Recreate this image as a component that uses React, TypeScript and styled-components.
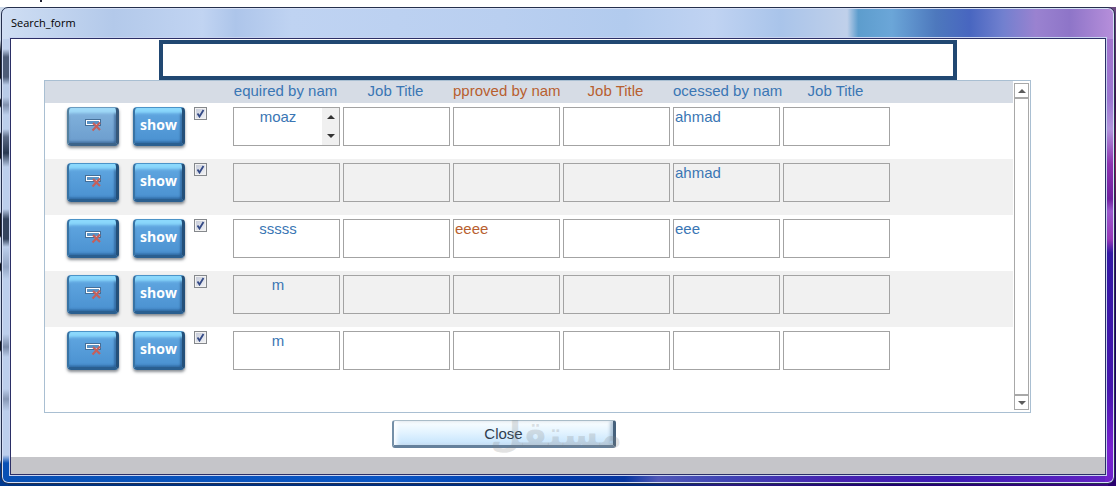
import React from "react";
import styled, { createGlobalStyle, css } from "styled-components";

const GlobalStyle = createGlobalStyle`
  * { box-sizing: border-box; }
  body { margin: 0; font-family: "Liberation Sans", Arial, sans-serif; }
`;

const BLUE = "#3a76b4";
const RUST = "#b85f30";

const Desktop = styled.div`
  min-height: 100vh;
  padding: 7px 1px 3px;
  background:
    radial-gradient(circle at 41px 1px, #223 0 1px, transparent 1px) no-repeat,
    linear-gradient(#fff, #fff) 0 0 / 100% 7px no-repeat,
    linear-gradient(#6b4a80 0, #40104f 20%, #8b1f5c 32%, #2b0a55 45%, #1a0060 70%, #2a0070) 100% 7px / 8px 100% no-repeat,
    linear-gradient(#cdd9ea 0 40px, #15181f 52px 78px, #cdd9ea 80px 98px, #15181f 100px 106px, #cdd9ea 108px 132px, #15181f 134px 158px, #cdd9ea 160px 212px, #15181f 214px 236px, #cdd9ea 238px 262px, #15181f 264px 270px, #cdd9ea 272px 340px, #15181f 342px 350px, #cdd9ea 352px 460px, #00398f 464px) 0 0 / 8px 100% no-repeat,
    linear-gradient(90deg, #00337f, #002a7c 58%, #2a1a80 65%, #1d0070 80%, #3a0880);
`;

const Window = styled.main`
  border: 1px solid #25304d;
  border-radius: 7px;
  box-shadow: inset 0 0 0 1px #d5dff5;
  padding: 1px 8px 8px;
  background:
    linear-gradient(90deg, #cfdef3 0, #b3c9ea 10%, #c1d4f2 18%, #adc5ea 21%, #bfd3f2 26%, #b9cff0 45%, #b2cbee 56%, #c0d3f2 64%, #a9c4ea 70%, #c0d0ea 76%, #5d9dcd 77%, #6ba6d8 80%, #4d78bd 84%, #4866c0 87%, #7180cf 90%, #9a82d0 93%, #8e75c8 96%, #b78fdb) 0 0 / 100% 31px no-repeat,
    linear-gradient(#c1d2ee 0 10px, #4d5c77 18px 38px, #b8cbe8 46px 58px, #8090ad 66px, #bccfec 76px 90px, #5b6a85 98px, #283850 114px, #bccfec 128px 170px, #34445d 180px 200px, #bccfec 208px, #93a5c4 228px, #bccfec 240px 295px, #7a8ba8 308px, #bccfec 318px 350px, #8798b5 360px, #bccfec 372px 416px, #0850b4 424px) 0 31px / 9px 100% no-repeat,
    linear-gradient(#a274cd 0, #9b76d0 60px, #b294dc 90px, #8d33b0 125px, #7020a0 160px, #9a58cc 172px, #9838b8 200px, #3318a4 214px, #4516ad 350px, #7a22d0 410px, #6424c4) 100% 31px / 9px 100% no-repeat,
    linear-gradient(90deg, #0850b4 0, #0a55c4 35%, #003aa8 50%, #0636a0 56%, #5058b8 59%, #4045b4 65%, #4722b0 75%, #3c1ab4 85%, #6424c4);
`;

const TitleBar = styled.header`
  height: 29px;
  padding: 5px 1px 0;
  h1 {
    margin: 0;
    color: #000;
    font: 11px/18px "Open Sans", "Segoe UI", sans-serif;
  }
`;

const Client = styled.form`
  border: 1px solid #2b2f66;
  box-shadow: 0 0 0 1px #c8d3f0;
  background: #fff;
  padding-top: 1px;
`;

const SearchInput = styled.input`
  display: block;
  width: 73%;
  height: 40px;
  margin: 0 auto;
  padding: 0 8px;
  border: 4px solid #214872;
  border-radius: 0;
  background: #fff;
  color: ${BLUE};
  font: 15px/17px "Liberation Sans", Arial, sans-serif;
  outline: none;
`;

const Panel = styled.section`
  display: flex;
  margin: 0 74px 0 33px;
  border: 1px solid #a9bfd2;
`;

const TableArea = styled.div`
  flex: 1;
  min-width: 0;
  padding-bottom: 29px;
`;

const Table = styled.table`
  width: 100%;
  table-layout: fixed;
  border-collapse: collapse;
  thead tr { height: 22px; background: #d6dce5; }
  tbody tr { height: 56px; }
  tbody tr:nth-child(even) { background: #f1f1f1; }
`;

const Column = styled.col<{ $width?: number }>`
  ${(p) => p.$width && css`width: ${p.$width}px;`}
`;

const HeadCell = styled.th<{ $color?: string }>`
  padding: 0 5px 0 0;
  color: ${(p) => p.$color ?? BLUE};
  font-size: 15px;
  font-weight: 400;
  line-height: 20px;
  text-align: center;
  vertical-align: top;
  white-space: nowrap;
`;

const Cell = styled.td<{ $indent?: number }>`
  padding: 4px 0 0 ${(p) => p.$indent ?? 0}px;
  vertical-align: top;
`;

const ActionButton = styled.button<{ $muted?: boolean }>`
  display: flex;
  align-items: center;
  justify-content: center;
  width: 52px;
  height: 39px;
  padding: 2px 0 3px;
  border: solid;
  border-width: 1px 3px 3px 2px;
  border-color: ${(p) => (p.$muted ? "#6c9cc0 #36587a #3c648a #54809f" : "#4c94c8 #24507a #2a5f90 #3873a4")};
  border-radius: 4px;
  background: ${(p) => (p.$muted ? "linear-gradient(#83b4de, #6c9dcd)" : "linear-gradient(#62a8e2, #4a91d0)")};
  box-shadow:
    inset 0 7px 3px -2px ${(p) => (p.$muted ? "#a0daf8" : "#8bd8fc")},
    inset -2px 0 2px rgba(20, 60, 110, 0.4),
    inset 0 -2px 2px rgba(20, 60, 110, 0.3),
    0 2px 3px rgba(40, 50, 60, 0.55);
  color: #fff;
  font: bold 14px/18px "Open Sans", "Segoe UI", sans-serif;
`;

const Tick = styled.input`
  appearance: none;
  display: block;
  width: 13px;
  height: 13px;
  margin: 0;
  border: 1px solid #85888c;
  background: linear-gradient(135deg, #c3c8d6, #f4f5f8);
  box-shadow: inset 0 0 0 1px #f2f2f2;
  &:checked {
    background:
      url("data:image/svg+xml,%3Csvg xmlns='http://www.w3.org/2000/svg' viewBox='0 0 11 11'%3E%3Cpath d='M2.5 5.5l2 3L8.5 2' fill='none' stroke='%23344a86' stroke-width='1.8'/%3E%3C/svg%3E"),
      linear-gradient(135deg, #c3c8d6, #f4f5f8);
  }
`;

const FieldBox = styled.div`
  display: flex;
  width: 107px;
  height: 39px;
  border: 1px solid #a3a3a3;
`;

const FieldText = styled.textarea<{ $color: string; $centered?: boolean; $reserve?: boolean }>`
  flex: 1;
  min-width: 0;
  height: 37px;
  padding: 0 ${(p) => (p.$reserve ? 18 : 1)}px 0 1px;
  border: 0;
  background: transparent;
  color: ${(p) => p.$color};
  font: 15px/17px "Liberation Sans", Arial, sans-serif;
  text-align: ${(p) => (p.$centered ? "center" : "left")};
  resize: none;
  overflow: hidden;
  outline: none;
`;

const FieldScroll = styled.div`
  display: flex;
  flex-direction: column;
  justify-content: space-between;
  align-items: center;
  width: 17px;
  padding: 7px 0;
  background: #f0f0f0;
`;

const ScrollBar = styled.div`
  display: flex;
  flex-direction: column;
  width: 15px;
  margin: 2px 1px;
  border: 1px solid #a8a8a8;
`;

const ScrollTrack = styled.div`
  flex: 1;
  border: solid #a8a8a8;
  border-width: 2px 0;
`;

const ArrowButton = styled.button`
  display: flex;
  align-items: center;
  justify-content: center;
  width: 100%;
  height: 13px;
  padding: 0;
  border: 0;
  background: transparent;
`;

const Actions = styled.div`
  display: flex;
  justify-content: center;
  padding: 7px 108px 9px 0;
`;

const CloseButton = styled.button`
  display: block;
  width: 224px;
  height: 28px;
  padding: 0;
  border: solid;
  border-width: 1px 3px 3px 2px;
  border-color: #a9bcc8 #46617c #64809c #7590a8;
  border-radius: 3px;
  background: linear-gradient(#fbfeff, #e4f4ff 45%, #c4e3fc);
  box-shadow:
    inset 4px 0 4px -1px rgba(255, 255, 255, 0.9),
    inset -3px 0 3px rgba(120, 150, 180, 0.5);
  color: #2f3e4e;
  font: 15px/17px "Liberation Sans", Arial, sans-serif;
`;

const CloseWrap = styled.div`
  position: relative;
`;

const Watermark = styled.span`
  position: absolute;
  right: -6px;
  top: -9px;
  color: rgba(125, 125, 125, 0.22);
  font: bold 36px/48px "DejaVu Sans", sans-serif;
  pointer-events: none;
`;

const StatusStrip = styled.footer`
  height: 17px;
  background: #c5c5c9;
`;

const Arrow = ({ down, color = "#5c5c5c" }: { down?: boolean; color?: string }) => (
  <svg width="8" height="4" viewBox="0 0 8 4" aria-hidden="true">
    <path d={down ? "M0 0h8L4 4z" : "M0 4h8L4 0z"} fill={color} />
  </svg>
);

const DeleteIcon = () => (
  <svg width="18" height="14" viewBox="0 0 18 14" aria-hidden="true">
    <rect x="1" y="1" width="16" height="7" fill="#456f98" />
    <rect x="2.5" y="2.5" width="13" height="4" fill="#5a93c6" stroke="#fff" />
    <path d="M9 5l7 7M16 4.5L8.500 12.500" stroke="#c4605c" strokeWidth="2.200" />
  </svg>
);

const people = [
  { label: "equired by nam" },
  { label: "Job Title" },
  { label: "pproved by nam", color: RUST },
  { label: "Job Title", color: RUST },
  { label: "ocessed by nam" },
  { label: "Job Title" },
];

const records = [
  ["moaz", "", "", "", "ahmad", ""],
  ["", "", "", "", "ahmad", ""],
  ["sssss", "", "eeee", "", "eee", ""],
  ["m", "", "", "", "", ""],
  ["m", "", "", "", "", ""],
];

export default function App() {
  return (
    <>
      <GlobalStyle />
      <Desktop>
        <Window>
          <TitleBar>
            <h1>Search_form</h1>
          </TitleBar>
          <Client onSubmit={(e) => e.preventDefault()}>
            <SearchInput type="text" aria-label="Search" />
            <Panel>
              <TableArea>
                <Table>
                  <colgroup>
                    <Column $width={88} />
                    <Column $width={61} />
                    <Column $width={39} />
                    {people.map((_, i) => (
                      <Column key={i} $width={110} />
                    ))}
                    <Column />
                  </colgroup>
                  <thead>
                    <tr>
                      <td colSpan={3} />
                      {people.map((p, i) => (
                        <HeadCell key={i} $color={p.color} scope="col">
                          {p.label}
                        </HeadCell>
                      ))}
                      <td />
                    </tr>
                  </thead>
                  <tbody>
                    {records.map((values, row) => (
                      <tr key={row}>
                        <Cell $indent={22}>
                          <ActionButton type="button" $muted={row === 0} aria-label="Delete">
                            <DeleteIcon />
                          </ActionButton>
                        </Cell>
                        <Cell>
                          <ActionButton type="button">show</ActionButton>
                        </Cell>
                        <Cell>
                          <Tick type="checkbox" defaultChecked aria-label={`Select row ${row + 1}`} />
                        </Cell>
                        {values.map((value, i) => (
                          <Cell key={i}>
                            <FieldBox>
                              <FieldText
                                aria-label={`${people[i].label}, row ${row + 1}`}
                                defaultValue={value}
                                $color={people[i].color ?? BLUE}
                                $centered={i === 0}
                                $reserve={i === 0 && row !== 0}
                              />
                              {row === 0 && i === 0 && (
                                <FieldScroll>
                                  <Arrow color="#333" />
                                  <Arrow down color="#333" />
                                </FieldScroll>
                              )}
                            </FieldBox>
                          </Cell>
                        ))}
                        <td />
                      </tr>
                    ))}
                  </tbody>
                </Table>
              </TableArea>
              <ScrollBar>
                <ArrowButton type="button" aria-label="Scroll up">
                  <Arrow />
                </ArrowButton>
                <ScrollTrack />
                <ArrowButton type="button" aria-label="Scroll down">
                  <Arrow down />
                </ArrowButton>
              </ScrollBar>
            </Panel>
            <Actions>
              <CloseWrap>
                <CloseButton type="button">Close</CloseButton>
                <Watermark lang="ar" dir="rtl">مستقل</Watermark>
              </CloseWrap>
            </Actions>
            <StatusStrip />
          </Client>
        </Window>
      </Desktop>
    </>
  );
}
